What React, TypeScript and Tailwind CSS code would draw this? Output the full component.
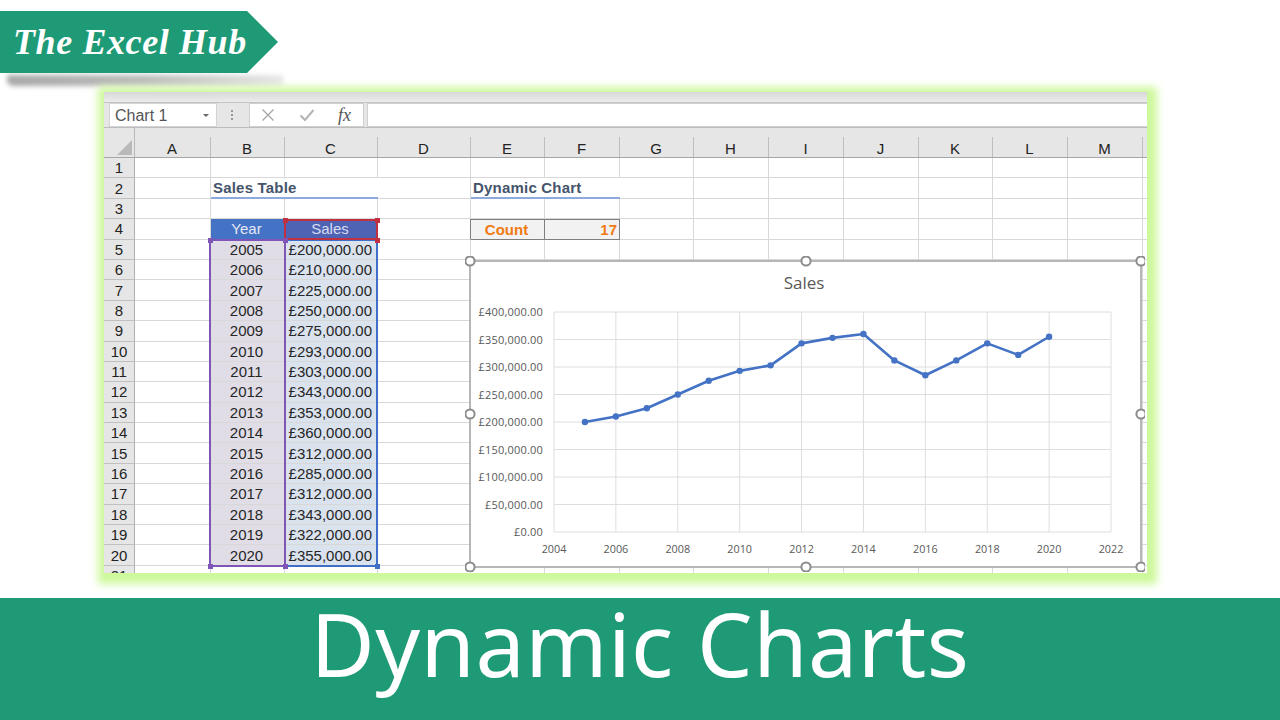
const cols = ['A','B','C','D','E','F','G','H','I','J','K','L','M'];
const years = [2005,2006,2007,2008,2009,2010,2011,2012,2013,2014,2015,2016,2017,2018,2019,2020];
const sales = [200,210,225,250,275,293,303,343,353,360,312,285,312,343,322,355];
const sheetFont = "font-['Liberation_Sans',Arial,sans-serif]";
const chartFont = "'Open Sans','Noto Sans',sans-serif";
const px = (y: number) => 554 - 470 + (y - 2004) * (557 / 18);
const py = (v: number) => 532 - 261 - v * 0.55;
const colGrid = 'grid grid-cols-[31px_76px_74px_93px_93px_74px_75px_74px_75px_75px_75px_74px_75px_75px_4px]';

function Cell({ r, c }: { r: number; c: string }) {
  const base = 'flex items-center overflow-hidden whitespace-nowrap text-[15px] leading-none';
  const grid = 'border-r border-b border-[#d8d8d8]';
  const title = 'font-bold text-[#44546a] tracking-[0.2px] overflow-visible pl-[2px] border-b-2 border-[#8ea9db]';
  if (r === 2 && c === 'B') return <div className={`${base} ${title}`}>Sales Table</div>;
  if (r === 2 && c === 'E') return <div className={`${base} ${title}`}>Dynamic Chart</div>;
  if (r === 2 && (c === 'C' || c === 'F')) return <div className={`${base} border-b-2 border-[#8ea9db]`} />;
  if (r === 4 && c === 'B') return <div className={`${base} ${grid} justify-center pr-[2px] bg-[#4472c4] text-[#e4e8f4]`}>Year</div>;
  if (r === 4 && c === 'C') return <div className={`${base} ${grid} justify-center pr-[2px] bg-[#4f63b4] text-[#d8dcef]`}>Sales</div>;
  if (r === 4 && c === 'D') return <div className={`${base} border-r border-b border-r-[#7f7f7f] border-b-[#d8d8d8]`} />;
  if (r === 4 && c === 'E') return <div className={`${base} justify-center pr-[2px] bg-[#f2f2f2] font-bold text-[#f07a14] border-y border-r border-[#7f7f7f]`}>Count</div>;
  if (r === 4 && c === 'F') return <div className={`${base} justify-end pr-[2px] bg-[#f2f2f2] font-bold text-[#f07a14] border-y border-r border-[#7f7f7f]`}>17</div>;
  if (r >= 5 && r <= 20 && c === 'B') return <div className={`${base} ${grid} justify-center pr-[2px] bg-[#e0dde6] text-[#262626]`}>{years[r - 5]}</div>;
  if (r >= 5 && r <= 20 && c === 'C') return <div className={`${base} ${grid} justify-end pr-[5px] bg-[#dae2ee] text-[#262626]`}>£{sales[r - 5]},000.00</div>;
  return <div className={`${base} ${grid}`} />;
}

function Handle({ x, y, color }: { x: number; y: number; color: string }) {
  return <span className="absolute w-[5px] h-[5px]" style={{ left: x - 2.5, top: y - 2.5, background: color }} />;
}

function Chart() {
  const pts = years.map((y, i) => [px(y), py(sales[i])]);
  const handles = [[0,0],[336,0],[671,0],[0,153],[671,153],[0,306],[336,306],[671,306]];
  return (
    <svg width="680" height="316" viewBox="-5 -5 680 316" className="absolute left-[361px] top-[164px]">
      <rect x="0" y="0" width="671" height="306" fill="#fff" stroke="#a6a6a6" strokeWidth="1.6" />
      {[0,1,2,3,4,5,6,7,8].map(i => <line key={i} x1="84" x2="641" y1={51 + i * 27.5} y2={51 + i * 27.5} stroke="#dedede" strokeWidth="1" />)}
      {[0,1,2,3,4,5,6,7,8,9].map(i => <line key={i} y1="51" y2="271" x1={84 + i * 61.89} x2={84 + i * 61.89} stroke="#dedede" strokeWidth="1" />)}
      {[400,350,300,250,200,150,100,50,0].map((v, i) => (
        <text key={v} x="73" y={55 + i * 27.5} textAnchor="end" fontSize="11" letterSpacing="0.2" fill="#595959" fontFamily={chartFont}>
          {v === 0 ? '£0.00' : `£${v},000.00`}
        </text>
      ))}
      {[2004,2006,2008,2010,2012,2014,2016,2018,2020,2022].map((y, i) => (
        <text key={y} x={84 + i * 61.89} y="292" textAnchor="middle" fontSize="10.8" fill="#595959" fontFamily={chartFont}>{y}</text>
      ))}
      <text x="334" y="28" textAnchor="middle" fontSize="17" fill="#595959" fontFamily={chartFont}>Sales</text>
      <polyline points={pts.map(p => p.join(',')).join(' ')} fill="none" stroke="#4472c4" strokeWidth="2.6" strokeLinejoin="round" />
      {pts.map((p, i) => <circle key={i} cx={p[0]} cy={p[1]} r="3.2" fill="#4472c4" />)}
      {handles.map((h, i) => <circle key={i} cx={h[0]} cy={h[1]} r="4.6" fill="#fff" stroke="#8c8c8c" strokeWidth="2" />)}
    </svg>
  );
}

export default function App() {
  const rows = Array.from({ length: 21 }, (_, i) => i + 1);
  return (
    <div className="w-[1280px] h-[720px] bg-white flex flex-col overflow-hidden">
      <div className="relative h-[92px] pt-[11px] shrink-0">
        <div className="absolute left-[7px] top-[75px] w-[276px] h-[11px] bg-gradient-to-r from-[#a8a8a8] via-[#bcbcbc] to-[#e8e8e8] blur-[2.5px] rounded-bl-[6px]" />
        <div className="relative w-[278px] h-[62px] bg-[#1f9a76] [clip-path:polygon(0_0,247px_0,100%_50%,247px_100%,0_100%)] flex items-center pl-[13px]">
          <span className="font-['Liberation_Serif',serif] italic font-bold text-white text-[36px] leading-none tracking-[0.6px] whitespace-nowrap">The Excel Hub</span>
        </div>
      </div>

      <div className={`relative ml-[104px] w-[1043px] h-[481px] shrink-0 bg-white shadow-[2px_3px_8px_8px_#cdf99b] ${sheetFont}`}>
        <div className="absolute inset-0 overflow-hidden">
          <div className="h-[11px] bg-gradient-to-b from-[#d8d8d8] to-[#ececec] border-b border-[#c4c4c4]" />
          <div className="h-[25px] bg-[#e6e6e6] flex items-center pl-[5px] border-b border-[#bcbcbc]">
            <div className="w-[108px] h-[24px] bg-white border border-[#d4d4d4] flex items-center justify-between pl-[5px] pr-[7px] pt-[1px] text-[16px] text-[#555]">
              <span>Chart 1</span>
              <span className="w-0 h-0 border-x-[3px] border-x-transparent border-t-[3px] border-t-[#666]" />
            </div>
            <div className="w-[32px] flex justify-center pr-[2px]">
              <div className="flex flex-col gap-[2px]">
                <span className="w-[2px] h-[2px] bg-[#999]" />
                <span className="w-[2px] h-[2px] bg-[#999]" />
                <span className="w-[2px] h-[2px] bg-[#999]" />
              </div>
            </div>
            <div className="w-[115px] h-[24px] bg-white border border-[#cfcfcf] flex items-center justify-between pl-[11px] pr-[12px]">
              <svg width="14" height="14" viewBox="0 0 14 14"><path d="M1.5 1.5 12.5 12.5M12.5 1.5 1.5 12.5" stroke="#a8a8a8" strokeWidth="1.4" fill="none" /></svg>
              <svg width="16" height="14" viewBox="0 0 16 14"><path d="M1.5 7.5 6 12 14.5 2" stroke="#b4b4b4" strokeWidth="2" fill="none" /></svg>
              <span className="font-['Liberation_Serif',serif] italic text-[18px] text-[#555] leading-none">fx</span>
            </div>
            <div className="ml-[3px] flex-1 h-[24px] bg-white border-y border-l border-[#cfcfcf]" />
          </div>

          <div className={`${colGrid} h-[30px] bg-[#e6e6e6] border-b border-[#a6a6a6] text-[15px] text-[#222] leading-none`}>
            <div className="flex items-end justify-end pr-[2px] pb-[2px] border-r border-[#b8b8b8]">
              <svg width="15" height="15" viewBox="0 0 15 15"><path d="M15 0V15H0Z" fill="#b9b9b9" /></svg>
            </div>
            {cols.map(c => (
              <div key={c} className="flex items-end justify-center pb-[1px] pr-[2px] relative">
                {c}
                <span className="absolute right-0 bottom-0 h-[20px] w-px bg-[#bdbdbd]" />
              </div>
            ))}
            <div />
          </div>

          <div className={`${colGrid} auto-rows-[20.4px]`}>
            {rows.map(r => [
              <div key={`h${r}`} className="bg-[#e6e6e6] border-r border-r-[#b0b0b0] border-b border-b-[#c0c0c0] flex items-center justify-center text-[15px] text-[#222] leading-none">{r}</div>,
              ...cols.map(c => <Cell key={`${c}${r}`} r={r} c={c} />),
              <div key={`t${r}`} className="border-b border-[#d8d8d8]" />,
            ])}
          </div>
        </div>

        {/* selection range highlights */}
        <div className="absolute left-[105px] top-[147px] w-[77px] h-[328px] border-2 border-[#7f55b5] pointer-events-none" />
        <div className="absolute left-[182px] top-[147px] w-[92px] h-[328px] border-y-2 border-r-2 border-[#3f6fc6] pointer-events-none" />
        <div className="absolute left-[180px] top-[127px] w-[94px] h-[21px] border-2 border-[#c0303f] pointer-events-none" />
        <Handle x={181} y={128} color="#c0303f" />
        <Handle x={273} y={128} color="#c0303f" />
        <Handle x={273} y={148} color="#c0303f" />
        <Handle x={106} y={148} color="#7f55b5" />
        <Handle x={181} y={148} color="#7f55b5" />
        <Handle x={106} y={474} color="#7f55b5" />
        <Handle x={181} y={474} color="#7f55b5" />
        <Handle x={273} y={474} color="#3f6fc6" />

        <Chart />
      </div>

      <div className="mt-[25px] flex-1 bg-[#1f9a76] flex items-center justify-center pb-[32px]">
        <span className="font-['Noto_Sans',sans-serif] text-white text-[88px] leading-none tracking-[0.45px] whitespace-nowrap">Dynamic Charts</span>
      </div>
    </div>
  );
}
